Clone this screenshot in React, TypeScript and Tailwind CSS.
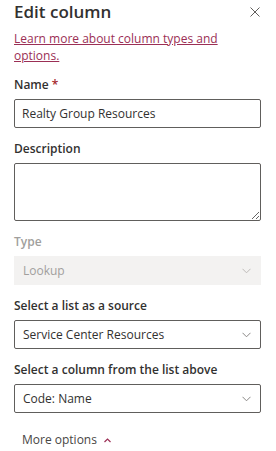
import { useState } from "react";

const font = { fontFamily: '"Open Sans", "Noto Sans", sans-serif' };

function Chevron({ className = "" }: { className?: string }) {
  return (
    <svg width="9" height="6" viewBox="0 0 9 6" className={className} fill="none">
      <path d="M0.5 0.8 L4.5 4.8 L8.5 0.8" stroke="currentColor" strokeWidth="1" />
    </svg>
  );
}

function FieldLabel({
  children,
  disabled,
  required,
}: {
  children: React.ReactNode;
  disabled?: boolean;
  required?: boolean;
}) {
  return (
    <label
      className={`block text-[12px] font-semibold leading-[20px] mb-[4px] ${
        disabled ? "text-[#a19f9d]" : "text-[#323130]"
      }`}
    >
      {children}
      {required && <span className="text-[#a4262c] pl-[3px]">*</span>}
    </label>
  );
}

function SelectBox({ value, disabled }: { value: string; disabled?: boolean }) {
  return (
    <div
      className={`h-[29px] flex items-center justify-between pl-[8px] pr-[9px] text-[12px] ${
        disabled
          ? "bg-[#f3f2f1] text-[#a19f9d] border border-transparent"
          : "bg-white text-[#323130] border border-[#605e5c] rounded-[2px]"
      }`}
    >
      <span>{value}</span>
      <Chevron className={disabled ? "text-[#bebbb8]" : "text-[#8a8886]"} />
    </div>
  );
}

export default function App() {
  const [name, setName] = useState("Realty Group Resources");
  const [desc, setDesc] = useState("");

  return (
    <div className="w-[276px] h-[451px] bg-white overflow-hidden pl-[14px] pr-[15px]" style={font}>
      {/* Header */}
      <div className="flex items-start justify-between">
        <h1 className="text-[17px] font-semibold leading-[24px] text-[#323130]">Edit column</h1>
        <button className="mt-[7px] mr-[1px] text-[#605e5c]" aria-label="Close">
          <svg width="10" height="10" viewBox="0 0 10 10" fill="none">
            <path d="M0.5 0.5 L9.5 9.5 M9.5 0.5 L0.5 9.5" stroke="currentColor" strokeWidth="1" />
          </svg>
        </button>
      </div>

      <a href="#" className="block mt-[6px] text-[12px] leading-[17px] text-[#9b2f55] underline">
        Learn more about column types and
        <br />
        options.
      </a>

      {/* Name */}
      <div className="mt-[11px]">
        <FieldLabel required>Name</FieldLabel>
        <input
          value={name}
          onChange={(e) => setName(e.target.value)}
          className="w-full h-[29px] border border-[#605e5c] rounded-[2px] px-[7px] text-[12px] text-[#323130] outline-none"
        />
      </div>

      {/* Description */}
      <div className="mt-[11px]">
        <FieldLabel>Description</FieldLabel>
        <textarea
          value={desc}
          onChange={(e) => setDesc(e.target.value)}
          className="block w-full h-[58px] border border-[#605e5c] rounded-[2px] px-[7px] py-[4px] text-[12px] text-[#323130] outline-none"
        />
      </div>

      {/* Type */}
      <div className="mt-[11px]">
        <FieldLabel disabled>Type</FieldLabel>
        <SelectBox value="Lookup" disabled />
      </div>

      <div className="mt-[11px]">
        <FieldLabel>Select a list as a source</FieldLabel>
        <SelectBox value="Service Center Resources" />
      </div>

      <div className="mt-[11px]">
        <FieldLabel>Select a column from the list above</FieldLabel>
        <SelectBox value="Code: Name" />
      </div>

      <button className="mt-[17px] ml-[8px] flex items-center gap-[7px] text-[12px] leading-[20px] text-[#484644]">
        More options
        <svg width="7" height="5" viewBox="0 0 7 5" fill="none" className="text-[#9b2f55]">
          <path d="M0.5 4 L3.5 1 L6.5 4" stroke="currentColor" strokeWidth="1.2" />
        </svg>
      </button>
    </div>
  );
}
